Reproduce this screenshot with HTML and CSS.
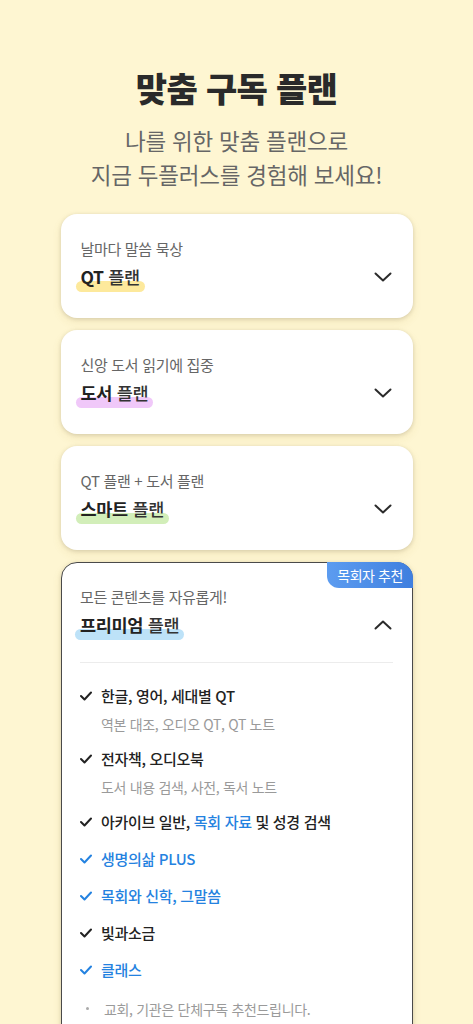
FILE: index.html
```html
<!DOCTYPE html>
<html lang="ko">
<head>
    <meta charset="UTF-8">
    <title>맞춤 구독 플랜</title>
    <link rel="stylesheet" href="styles.css">
</head>
<body>
    <header class="intro">
        <h1>맞춤 구독 플랜</h1>
        <p>나를 위한 맞춤 플랜으로<br>지금 두플러스를 경험해 보세요!</p>
    </header>
    <main class="plans">
        <article class="plan">
            <p class="plan-desc">날마다 말씀 묵상</p>
            <div class="plan-head">
                <h2 class="plan-name yellow"><b>QT</b> 플랜</h2>
                <svg class="chevron" width="18" height="10" viewBox="0 0 18 10"><polyline points="1.5,1.5 9,8.5 16.5,1.5"/></svg>
            </div>
        </article>
        <article class="plan">
            <p class="plan-desc">신앙 도서 읽기에 집중</p>
            <div class="plan-head">
                <h2 class="plan-name purple"><b>도서</b> 플랜</h2>
                <svg class="chevron" width="18" height="10" viewBox="0 0 18 10"><polyline points="1.5,1.5 9,8.5 16.5,1.5"/></svg>
            </div>
        </article>
        <article class="plan">
            <p class="plan-desc">QT 플랜 + 도서 플랜</p>
            <div class="plan-head">
                <h2 class="plan-name green"><b>스마트</b> 플랜</h2>
                <svg class="chevron" width="18" height="10" viewBox="0 0 18 10"><polyline points="1.5,1.5 9,8.5 16.5,1.5"/></svg>
            </div>
        </article>
        <article class="plan premium">
            <span class="badge">목회자 추천</span>
            <p class="plan-desc">모든 콘텐츠를 자유롭게!</p>
            <div class="plan-head">
                <h2 class="plan-name blue"><b>프리미엄</b> 플랜</h2>
                <svg class="chevron" width="18" height="10" viewBox="0 0 18 10"><polyline points="1.5,8.5 9,1.5 16.5,8.5"/></svg>
            </div>
            <ul class="features">
                <li>
                    <div class="feature"><svg class="check" width="12" height="10" viewBox="0 0 12 10"><polyline points="1,5 4.5,8.5 11,1.5"/></svg>한글, 영어, 세대별 QT</div>
                    <p class="feature-sub">역본 대조, 오디오 QT, QT 노트</p>
                </li>
                <li>
                    <div class="feature"><svg class="check" width="12" height="10" viewBox="0 0 12 10"><polyline points="1,5 4.5,8.5 11,1.5"/></svg>전자책, 오디오북</div>
                    <p class="feature-sub">도서 내용 검색, 사전, 독서 노트</p>
                </li>
                <li>
                    <div class="feature"><svg class="check" width="12" height="10" viewBox="0 0 12 10"><polyline points="1,5 4.5,8.5 11,1.5"/></svg><span>아카이브 일반, <em>목회 자료</em> 및 성경 검색</span></div>
                </li>
                <li>
                    <div class="feature highlight"><svg class="check" width="12" height="10" viewBox="0 0 12 10"><polyline points="1,5 4.5,8.5 11,1.5"/></svg>생명의삶 PLUS</div>
                </li>
                <li>
                    <div class="feature highlight"><svg class="check" width="12" height="10" viewBox="0 0 12 10"><polyline points="1,5 4.5,8.5 11,1.5"/></svg>목회와 신학, 그말씀</div>
                </li>
                <li>
                    <div class="feature"><svg class="check" width="12" height="10" viewBox="0 0 12 10"><polyline points="1,5 4.5,8.5 11,1.5"/></svg>빛과소금</div>
                </li>
                <li>
                    <div class="feature highlight"><svg class="check" width="12" height="10" viewBox="0 0 12 10"><polyline points="1,5 4.5,8.5 11,1.5"/></svg>클래스</div>
                </li>
            </ul>
            <p class="note">교회, 기관은 단체구독 추천드립니다.</p>
        </article>
    </main>
</body>
</html>
```

FILE: styles.css
```css
body {
    font-family: 'Noto Sans CJK KR', 'Noto Sans', sans-serif;
    background-color: #fef6d2;
    color: #222;
    margin: 0;
    padding: 0;
    letter-spacing: -0.02em;
}

.intro {
    text-align: center;
    padding-top: 66px;
}

.intro h1 {
    margin: 0;
    font-size: 34px;
    line-height: 44px;
    font-weight: 900;
    letter-spacing: -0.02em;
    color: #2a2a2a;
}

.intro p {
    margin: 13px 0 0;
    font-size: 22.5px;
    line-height: 34px;
    letter-spacing: -0.01em;
    color: #666;
}

.plans {
    width: 352px;
    margin: 23px auto 0;
    display: flex;
    flex-direction: column;
    gap: 12px;
}

.plan {
    position: relative;
    background-color: #fff;
    border-radius: 16px;
    padding: 24px 20px 30px;
    box-shadow: 0 1px 4px rgba(0, 0, 0, 0.14), 0 4px 10px rgba(170, 140, 50, 0.12);
}

.plan-desc {
    margin: 0;
    font-size: 15px;
    line-height: 22px;
    color: #666;
}

.plan-head {
    display: flex;
    justify-content: space-between;
    align-items: center;
    margin-top: 6px;
}

.plan-name {
    position: relative;
    z-index: 0;
    margin: 0;
    font-size: 17.5px;
    line-height: 22px;
    font-weight: 500;
    color: #333;
}

.plan-name b {
    font-weight: 700;
    color: #222;
}

.plan-name::after {
    content: '';
    position: absolute;
    z-index: -1;
    left: -5px;
    right: -5px;
    bottom: -4px;
    height: 11px;
    border-radius: 6px;
}

.yellow::after { background-color: #fde99c; }
.purple::after { background-color: #f0c8f9; }
.green::after { background-color: #d2eeb9; }
.blue::after { background-color: #bde2f8; }

.chevron {
    margin-right: 1px;
}

.chevron polyline {
    fill: none;
    stroke: #2b2b2b;
    stroke-width: 2;
    stroke-linecap: round;
    stroke-linejoin: round;
}

.premium {
    border: 1.5px solid #4a4a4a;
    padding: 22.5px 18.5px 60px;
}

.badge {
    position: absolute;
    top: -1.5px;
    right: -1.5px;
    height: 26px;
    line-height: 26px;
    padding: 0 10px;
    font-size: 14px;
    color: #fff;
    background: linear-gradient(to right, #5c9cf0, #3f7fdf);
    border-top-right-radius: 16px;
    border-bottom-left-radius: 12px;
    letter-spacing: -0.03em;
}

.premium .plan-head {
    padding-bottom: 26px;
    border-bottom: 1px solid #ececec;
}

.features {
    list-style: none;
    margin: 0;
    padding: 21px 0 0;
    display: flex;
    flex-direction: column;
    gap: 13px;
}

.feature {
    display: flex;
    align-items: center;
    gap: 9px;
    font-size: 15px;
    line-height: 24px;
    font-weight: 500;
    color: #222;
}

.check polyline {
    fill: none;
    stroke: #222;
    stroke-width: 2;
    stroke-linecap: round;
    stroke-linejoin: round;
}

.feature em {
    font-style: normal;
    color: #2482e0;
}

.highlight {
    color: #2482e0;
}

.highlight .check polyline {
    stroke: #2482e0;
}

.feature-sub {
    margin: 6px 0 0 21px;
    font-size: 14px;
    line-height: 20px;
    color: #9a9a9a;
}

.note {
    display: flex;
    align-items: center;
    margin: 17px 0 0;
    font-size: 14px;
    line-height: 20px;
    color: #9a9a9a;
}

.note::before {
    content: '';
    width: 3px;
    height: 3px;
    border-radius: 50%;
    background-color: #aaa;
    margin: 0 15px 0 6px;
}
```
